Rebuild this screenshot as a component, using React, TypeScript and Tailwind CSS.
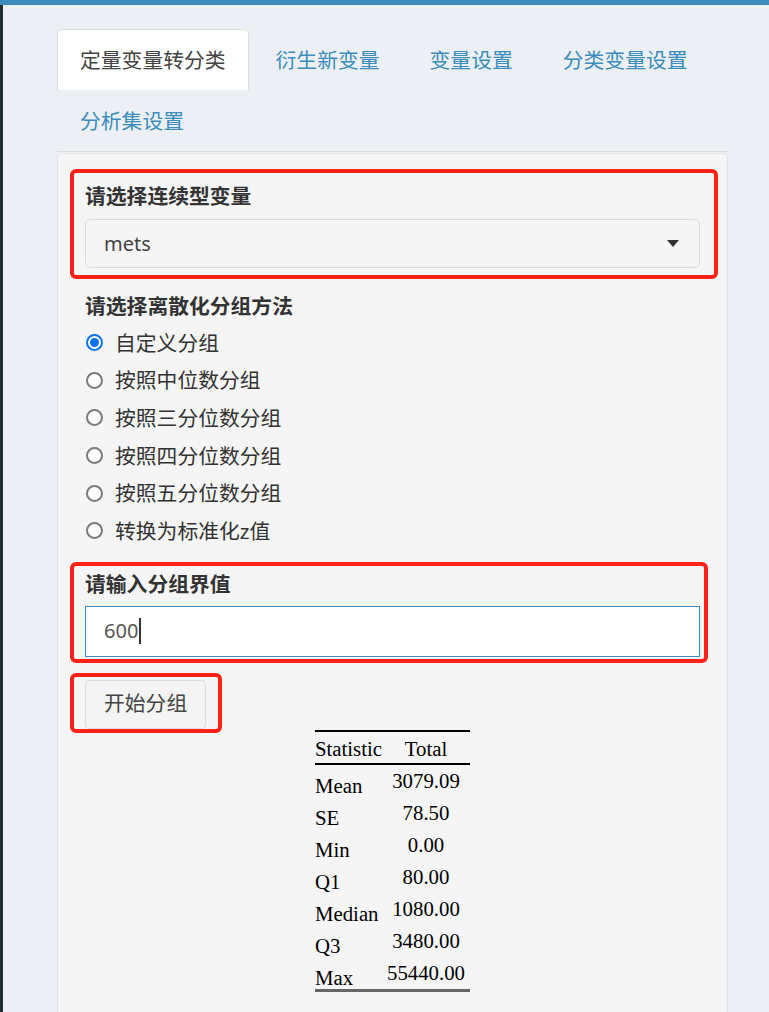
import React from 'react';

const tabs = ['定量变量转分类', '衍生新变量', '变量设置', '分类变量设置', '分析集设置'];

const methods = [
  '自定义分组',
  '按照中位数分组',
  '按照三分位数分组',
  '按照四分位数分组',
  '按照五分位数分组',
  '转换为标准化z值',
];

const stats: [string, string][] = [
  ['Mean', '3079.09'],
  ['SE', '78.50'],
  ['Min', '0.00'],
  ['Q1', '80.00'],
  ['Median', '1080.00'],
  ['Q3', '3480.00'],
  ['Max', '55440.00'],
];

function Radio({ checked, label }: { checked?: boolean; label: string }) {
  return (
    <div className="flex h-[37.6px] items-center">
      {checked ? (
        <span className="ml-[1px] flex h-[17px] w-[17px] shrink-0 items-center justify-center rounded-full border-2 border-[#0a73f0] bg-white">
          <span className="h-[9px] w-[9px] rounded-full bg-[#0a73f0]" />
        </span>
      ) : (
        <span className="ml-[1px] block h-[17px] w-[17px] shrink-0 rounded-full border-2 border-[#7a7a7a] bg-white" />
      )}
      <span className="ml-[12px] text-[20.8px] leading-[30px] text-[#333]">{label}</span>
    </div>
  );
}

function RedMark({ className }: { className: string }) {
  return (
    <div
      className={`pointer-events-none absolute rounded-[6px] border-4 border-[#ff2216] ${className}`}
    />
  );
}

export default function App() {
  return (
    <div className="flex min-h-screen flex-col bg-[#ecf0f5] font-['Noto_Sans','Noto_Sans_CJK_SC',sans-serif]">
      <div className="h-[5px] bg-[#3c8dbc]" />
      <div className="flex flex-1">
        <div className="w-[3px] bg-[#222d32]" />
        <div className="flex-1 pl-[54px] pr-[41px] pt-[24px]">
          {/* tabs */}
          <div className="flex flex-wrap border-b border-[#dddddd]">
            {tabs.map((t, i) => (
              <div
                key={t}
                className={`mr-[4px] flex h-[61px] items-center text-[20.8px] leading-[30px] ${
                  i === 0
                    ? 'rounded-t-[5px] border border-b-0 border-[#dddddd] bg-white px-[22px] text-[#444]'
                    : 'px-[23px] text-[#3c8dbc]'
                }`}
              >
                {t}
              </div>
            ))}
          </div>

          {/* well */}
          <div className="mt-px rounded-[5px] border border-[#e3e3e3] bg-[#f5f5f5] px-[27px] pb-[60px] pt-[27px]">
            <div className="relative">
              <RedMark className="-left-[15px] -right-[18px] -top-[12px] -bottom-[11px]" />
              <div className="mb-[8px] text-[20.8px] font-bold leading-[30px] text-[#333]">
                请选择连续型变量
              </div>
              <div className="flex h-[49px] items-center justify-between rounded-[5px] border border-[#dcdcdc] bg-[#f5f5f5] pl-[18px] pr-[18px]">
                <span className="text-[20px] text-[#444]">mets</span>
                <svg width="12" height="7" viewBox="0 0 12 7" className="mr-[2px]">
                  <path d="M0 0 L12 0 L6 7 Z" fill="#333" />
                </svg>
              </div>
            </div>

            <div className="mt-[23px] text-[20.8px] font-bold leading-[30px] text-[#333]">
              请选择离散化分组方法
            </div>
            <div className="mt-[3px]">
              {methods.map((m, i) => (
                <Radio key={m} label={m} checked={i === 0} />
              ))}
            </div>

            <div className="relative mt-[19px]">
              <RedMark className="-left-[15px] -right-[8px] -top-[7px] -bottom-[6px]" />
              <div className="mb-[7px] text-[20.8px] font-bold leading-[30px] text-[#333]">
                请输入分组界值
              </div>
              <div className="flex h-[51px] items-center border border-[#3c8dbc] bg-white pl-[18px]">
                <span className="text-[20px] text-[#555]">600</span>
                <span className="ml-px h-[26px] w-[2px] bg-[#333]" />
              </div>
            </div>

            <div className="relative mt-[23px] w-fit">
              <RedMark className="-left-[15px] -right-[16px] -top-[7px] -bottom-[4px]" />
              <div className="flex h-[49px] items-center rounded-[4px] border border-[#dddddd] bg-[#f4f4f4] px-[18px] text-[20.8px] text-[#444]">
                开始分组
              </div>
            </div>

            <div className="mt-px flex justify-center">
              <table className="border-collapse font-['Liberation_Serif',serif] text-[20.8px] text-black">
                <thead>
                  <tr className="border-y-2 border-black">
                    <th className="w-[67px] pb-[3px] pt-[6px] text-left font-normal leading-[22px]">
                      Statistic
                    </th>
                    <th className="w-[88px] pb-[3px] pt-[6px] text-center font-normal leading-[22px]">
                      Total
                    </th>
                  </tr>
                </thead>
                <tbody className="border-b-[3px] border-[#666]">
                  {stats.map(([k, v]) => (
                    <tr key={k}>
                      <td className="h-[32px] whitespace-nowrap pt-[10px] align-top leading-[22px]">{k}</td>
                      <td className="h-[32px] whitespace-nowrap pt-[5px] text-center align-top leading-[22px]">
                        {v}
                      </td>
                    </tr>
                  ))}
                </tbody>
              </table>
            </div>
          </div>
        </div>
      </div>
    </div>
  );
}
